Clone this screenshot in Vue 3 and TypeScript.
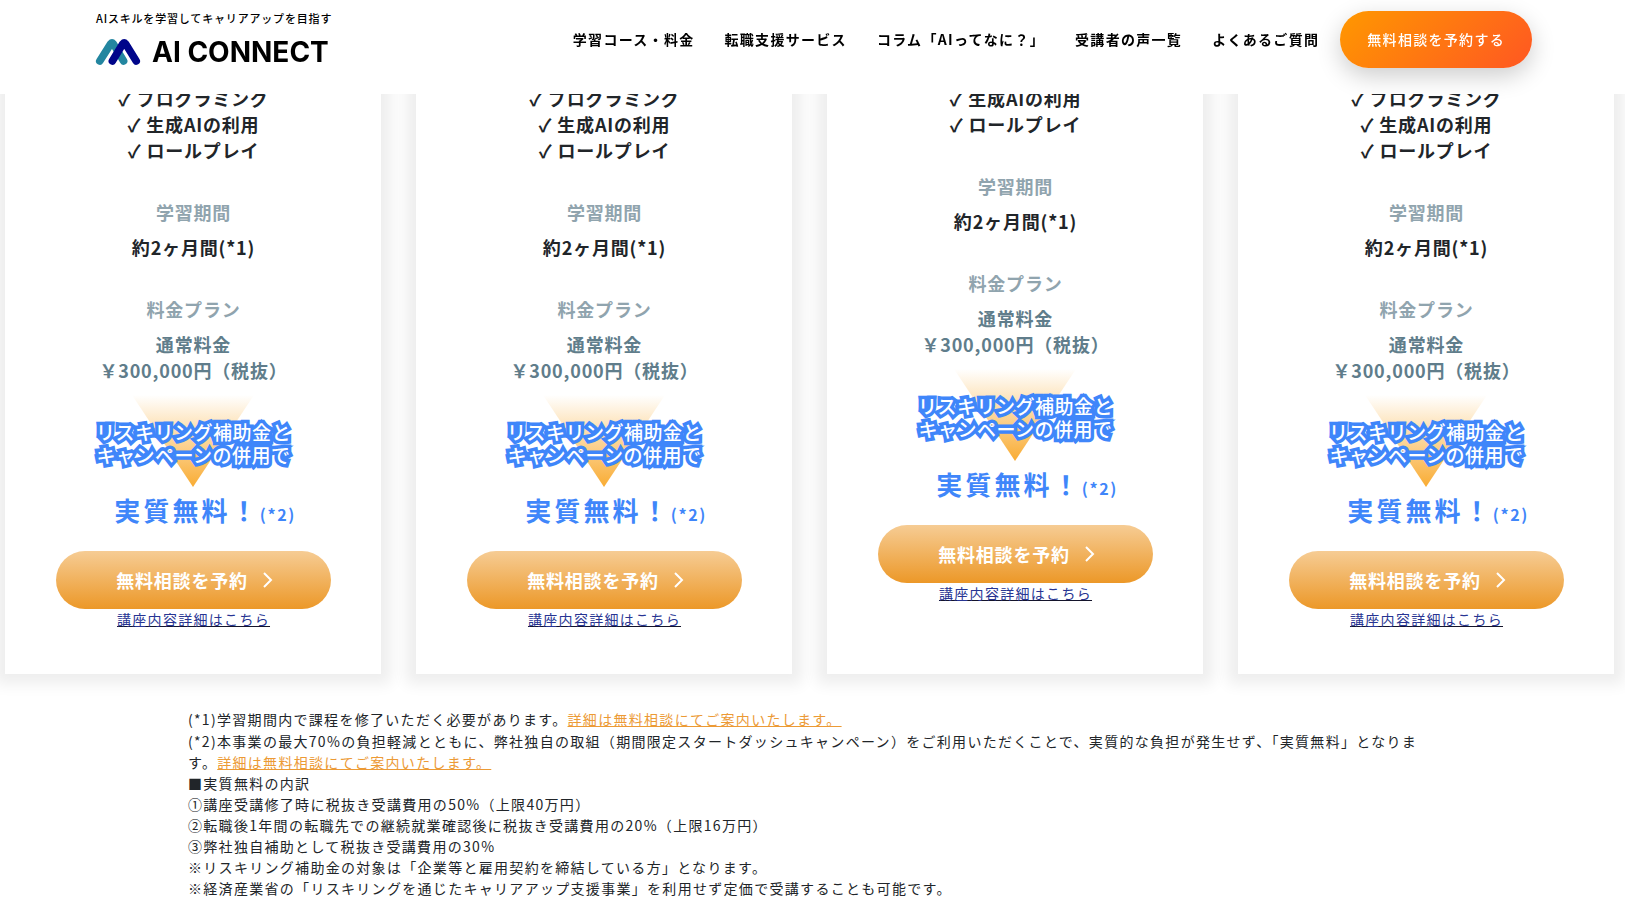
<script setup lang="ts">
interface Course {
  id: number
  skills: string[]
}

const navItems: string[] = [
  '学習コース・料金',
  '転職支援サービス',
  'コラム「AIってなに？」',
  '受講者の声一覧',
  'よくあるご質問',
]

const courses: Course[] = [
  { id: 1, skills: ['プログラミング', '生成AIの利用', 'ロールプレイ'] },
  { id: 2, skills: ['プログラミング', '生成AIの利用', 'ロールプレイ'] },
  { id: 3, skills: ['生成AIの利用', 'ロールプレイ'] },
  { id: 4, skills: ['プログラミング', '生成AIの利用', 'ロールプレイ'] },
]

const offerLines: string[] = ['リスキリング補助金と', 'キャンペーンの併用で']

const breakdown: string[] = [
  '■実質無料の内訳',
  '①講座受講修了時に税抜き受講費用の50%（上限40万円）',
  '②転職後1年間の転職先での継続就業確認後に税抜き受講費用の20%（上限16万円）',
  '③弊社独自補助として税抜き受講費用の30%',
  '※リスキリング補助金の対象は「企業等と雇用契約を締結している方」となります。',
  '※経済産業省の「リスキリングを通じたキャリアアップ支援事業」を利用せず定価で受講することも可能です。',
]
</script>

<template>
  <div class="page">
    <header class="header">
      <a class="brand" href="#">
        <span class="tagline">AIスキルを学習してキャリアアップを目指す</span>
        <span class="logo">
          <svg class="logo-mark" viewBox="0 0 44 26" aria-hidden="true">
            <path d="M3.8 22 L14.8 4.6 Q16 3.2 17.2 4.6 L27.6 22" stroke="#2386a0" />
            <path d="M16.4 22 L27 4.6 Q28.2 3.2 29.4 4.6 L40.2 22" stroke="#00058a" />
          </svg>
          <span class="logo-text">AI CONNECT</span>
        </span>
      </a>
      <nav class="nav">
        <a v-for="item in navItems" :key="item" class="nav-link" href="#">{{ item }}</a>
      </nav>
      <a class="reserve" href="#">無料相談を予約する</a>
    </header>

    <main>
      <section class="courses">
        <article v-for="course in courses" :key="course.id" class="card">
          <ul class="skills">
            <li v-for="skill in course.skills" :key="skill">✓ {{ skill }}</li>
          </ul>
          <h3 class="label">学習期間</h3>
          <p class="value">約2ヶ月間(*1)</p>
          <h3 class="label">料金プラン</h3>
          <p class="value price">通常料金<br />￥300,000円（税抜）</p>
          <div class="offer">
            <svg class="offer-arrow" viewBox="0 0 122 92" aria-hidden="true">
              <defs>
                <linearGradient :id="`fade-${course.id}`" x1="0" y1="0" x2="0" y2="1">
                  <stop offset="0" stop-color="#f9ac33" stop-opacity="0" />
                  <stop offset="1" stop-color="#f9ac33" />
                </linearGradient>
              </defs>
              <path d="M0 0 H122 L61 92 Z" :fill="`url(#fade-${course.id})`" />
            </svg>
            <p class="offer-text">
              <span v-for="line in offerLines" :key="line" class="offer-line">{{ line }}</span>
            </p>
          </div>
          <p class="free">実質無料！<small>(*2)</small></p>
          <a class="cta" href="#">
            無料相談を予約
            <svg class="chevron" viewBox="0 0 10 16" aria-hidden="true">
              <path d="M1 1 L8 8 L1 15" />
            </svg>
          </a>
          <a class="detail" href="#">講座内容詳細はこちら</a>
        </article>
      </section>

      <section class="notes">
        <p class="lead">(*1)学習期間内で課程を修了いただく必要があります。<a href="#">詳細は無料相談にてご案内いたします。</a></p>
        <p>(*2)本事業の最大70%の負担軽減とともに、弊社独自の取組（期間限定スタートダッシュキャンペーン）をご利用いただくことで、実質的な負担が発生せず、「実質無料」となります。<a href="#">詳細は無料相談にてご案内いたします。</a></p>
        <p v-for="line in breakdown" :key="line">{{ line }}</p>
      </section>
    </main>
  </div>
</template>

<style>
body {
  margin: 0;
  background: #fff;
}
</style>

<style scoped>
.page {
  font-family: "Noto Sans CJK JP", sans-serif;
  font-size: 14px;
  line-height: 21px;
  letter-spacing: 0.093em;
  color: #212529;
}

p,
ul,
h3 {
  margin: 0;
  padding: 0;
}

.header {
  position: fixed;
  top: 0;
  left: 0;
  right: 0;
  z-index: 10;
  box-sizing: border-box;
  height: 94px;
  padding: 11px 93px 0 96px;
  display: flex;
  align-items: flex-start;
  background: #fff;
}

.header a {
  text-decoration: none;
}

.brand {
  display: flex;
  flex-direction: column;
  color: #000;
}

.tagline {
  font-size: 11px;
  font-weight: 500;
  line-height: 14px;
  letter-spacing: 0.075em;
}

.logo {
  display: flex;
  align-items: center;
  gap: 12px;
  margin-top: 14px;
}

.logo-mark {
  width: 44px;
  height: 26px;
  overflow: visible;
  fill: none;
  stroke-width: 7.6;
  stroke-linecap: round;
  stroke-linejoin: round;
}

.logo-text {
  font-family: Inter, sans-serif;
  font-size: 28px;
  font-weight: 700;
  line-height: 26px;
  letter-spacing: 0;
}

.nav {
  display: flex;
  gap: 30px;
  margin: 18px 21px 0 auto;
}

.nav-link {
  color: #000;
  font-weight: 700;
  white-space: nowrap;
}

.reserve {
  padding: 18px 27px;
  border-radius: 29px;
  background: linear-gradient(135deg, #ff9800, #ff5722);
  box-shadow: 0 8px 24px rgba(0, 0, 0, 0.2);
  color: #fff;
  font-weight: 500;
  white-space: nowrap;
}

.courses {
  display: grid;
  grid-template-columns: repeat(4, 1fr);
  gap: 35px;
  padding: 0 11px 0 5px;
}

.card {
  padding: 85px 50px 44px 51px;
  display: flex;
  flex-direction: column;
  align-items: center;
  background: #fff;
  box-shadow: 0 0 14px 10px #eee;
  text-align: center;
}

.skills,
.label,
.value,
.cta {
  font-size: 18px;
  font-weight: 600;
  line-height: 26px;
  letter-spacing: 0.045em;
}

.skills {
  list-style: none;
}

.label {
  margin-top: 36px;
  color: #90a4ae;
}

.value {
  margin-top: 9px;
}

.price {
  color: #607d8b;
}

.offer {
  display: grid;
  justify-items: center;
  margin-top: 12px;
}

.offer-arrow,
.offer-text {
  grid-area: 1 / 1;
}

.offer-arrow {
  width: 122px;
  height: 92px;
}

.offer-text {
  padding-top: 25px;
  color: #fff;
  font-size: 19px;
  font-weight: 500;
  line-height: 23px;
  letter-spacing: 0.025em;
  white-space: nowrap;
  paint-order: stroke fill;
  -webkit-text-stroke: 7px #3f86fa;
}

.offer-line {
  display: block;
}

.free {
  margin-top: 4px;
  padding-left: 23px;
  color: #3f86fa;
  font-size: 26px;
  font-weight: 600;
  line-height: 38px;
  letter-spacing: 0.12em;
}

.free small {
  font-size: 16px;
  letter-spacing: 0.1em;
}

.cta {
  align-self: stretch;
  display: flex;
  align-items: center;
  justify-content: center;
  gap: 15px;
  margin-top: 18px;
  padding: 16px 0 16px 2px;
  border-radius: 29px;
  background: linear-gradient(#f6cc94, #ec9828);
  color: #fff;
  font-weight: 700;
  text-decoration: none;
}

.chevron {
  width: 10px;
  height: 16px;
  fill: none;
  stroke: #fff;
  stroke-width: 2;
}

.detail {
  color: #283593;
  text-decoration-color: #14142b;
}

.notes {
  padding: 35px 200px 0 188px;
}

.notes .lead {
  margin-bottom: 1px;
}

.notes a {
  color: #ec9a35;
}
</style>
